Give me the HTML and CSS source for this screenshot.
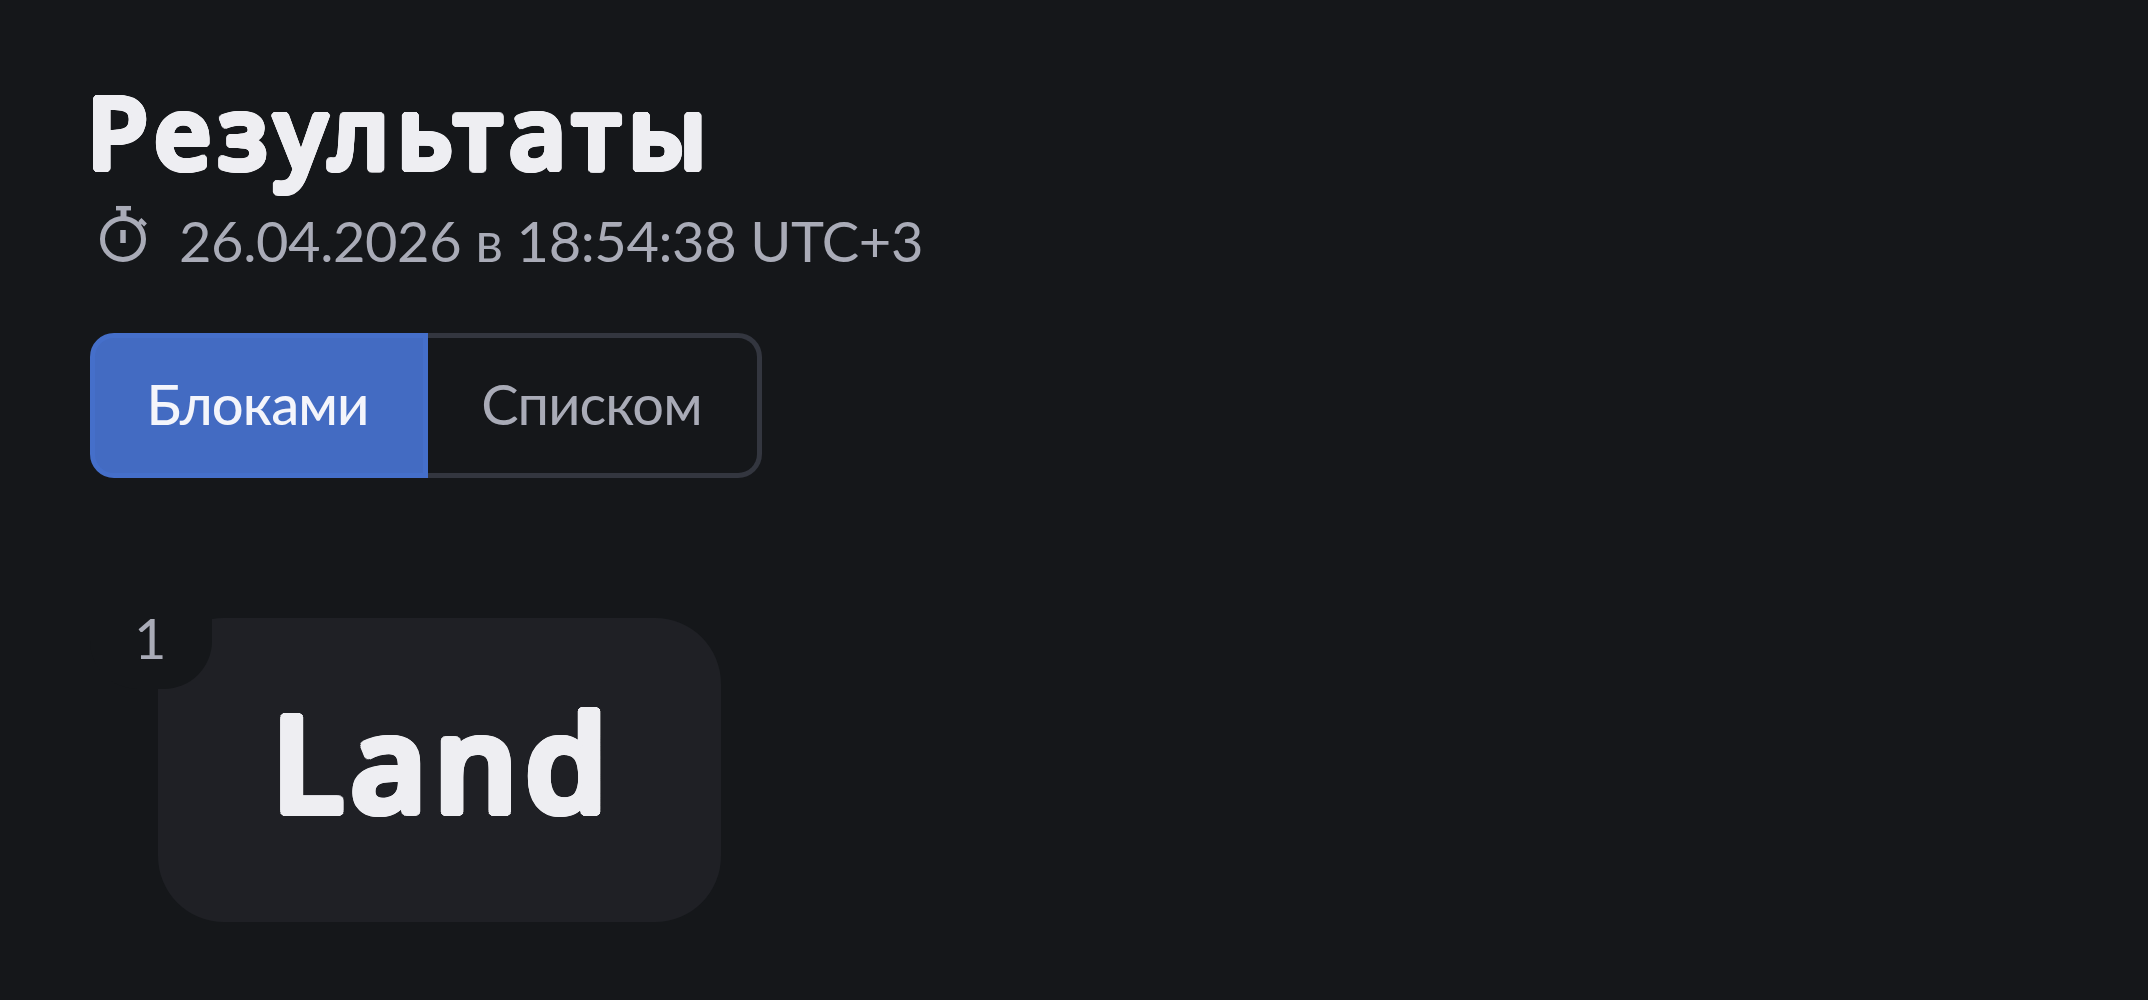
FILE: index.html
```
<!DOCTYPE html>
<html lang="ru">
<head>
<meta charset="utf-8">
<title>Результаты</title>
<link rel="stylesheet" href="styles.css">
</head>
<body>
<main class="results">
  <h1 class="title">Результаты</h1>
  <div class="meta">
    <svg class="timer" viewBox="0 0 48 58" fill="none" stroke="currentColor">
      <circle cx="24" cy="34" r="20.500" stroke-width="5"/>
      <path d="M17 3.200h15" stroke-width="4.500"/>
      <path d="M24.500 3v11" stroke-width="6"/>
      <path d="M38.500 20.500l5-5M41 14.500l5.500 5.500" stroke-width="4"/>
      <path d="M24 25v13" stroke-width="5.500"/>
    </svg>
    <time class="date">26.04.2026 в 18:54:38 UTC+3</time>
  </div>
  <div class="switch">
    <button class="option option-active">Блоками</button>
    <button class="option">Списком</button>
  </div>
  <section class="card">
    <span class="badge">1</span>
    <span class="word">Land</span>
  </section>
</main>
</body>
</html>
```
FILE: styles.css
```
* { box-sizing: border-box; }
body {
  margin: 0;
  min-height: 100vh;
  background: #15171a;
  color: #a9abb7;
  font: 400 56px/60px Lato, "Noto Sans", sans-serif;
}
.results {
  display: flex;
  flex-direction: column;
  align-items: flex-start;
  padding: 70px 90px 0;
}
/* The ring of shadows thickens the strokes and rounds their ends. */
.title, .word {
  color: #eeeef2;
  font-family: "Noto Sans", sans-serif;
  font-weight: 500;
  text-shadow:
    0.032em 0, -0.032em 0, 0 0.032em, 0 -0.032em,
    0.023em 0.023em, -0.023em 0.023em, 0.023em -0.023em, -0.023em -0.023em,
    0.03em 0.012em, -0.03em 0.012em, 0.03em -0.012em, -0.03em -0.012em,
    0.012em 0.03em, -0.012em 0.03em, 0.012em -0.03em, -0.012em -0.03em;
}
.title {
  margin: 0 0 20px -3px;
  font-size: 100px;
  line-height: 120px;
  letter-spacing: 7.500px;
}
.meta {
  display: flex;
  align-items: flex-start;
  height: 60px;
}
.timer {
  width: 48px;
  height: 58px;
  margin: -5px 0 0 9px;
}
.date {
  margin: 1px 0 0 32px;
  letter-spacing: -0.4px;
  white-space: nowrap;
}
.switch {
  display: flex;
  width: 672px;
  height: 145px;
  margin-top: 63px;
}
.option {
  width: 334px;
  padding: 0 2px 4px 0;
  border: 5px solid #33363f;
  border-left: 0;
  border-radius: 0 24px 24px 0;
  background: transparent;
  color: inherit;
  font: inherit;
  letter-spacing: -0.9px;
}
.option-active {
  width: 338px;
  padding-right: 3px;
  border: 5px solid #456fca;
  border-radius: 24px 0 0 24px;
  background: #436bc2;
  color: #f4f5fb;
  font-weight: 500;
}
.card {
  position: relative;
  display: flex;
  align-items: center;
  justify-content: center;
  width: 563px;
  height: 304px;
  margin: 140px 0 0 68px;
  padding-bottom: 18px;
  border-radius: 66px;
  background: #1f2025;
}
.word {
  margin-right: -8px;
  font-size: 132px;
  line-height: 160px;
  letter-spacing: 8px;
}
.badge {
  position: absolute;
  top: -18px;
  left: -68px;
  width: 122px;
  height: 89px;
  padding: 8px 0 0 44px;
  border-radius: 0 0 48px 48px;
  background: #15171a;
}
```
